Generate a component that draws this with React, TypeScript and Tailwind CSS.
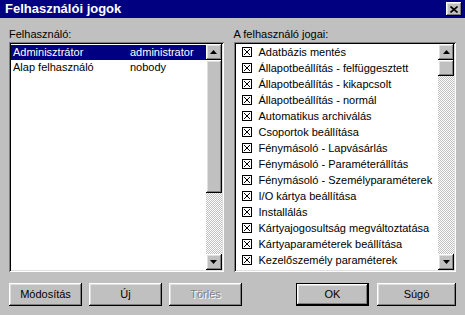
import React from "react";

const raised =
  "shadow-[inset_-1px_-1px_#000,inset_1px_1px_#fff,inset_-2px_-2px_#808080,inset_2px_2px_#dfdfdf]";
const sunken =
  "shadow-[inset_1px_1px_#808080,inset_-1px_-1px_#fff,inset_2px_2px_#000,inset_-2px_-2px_#dfdfdf]";
const track =
  "bg-[image:repeating-conic-gradient(#fff_0_25%,#c0c0c0_0_50%)] bg-[length:2px_2px]";

const users = [
  { name: "Adminisztrátor", login: "administrator" },
  { name: "Alap felhasználó", login: "nobody" },
];

const rights = [
  "Adatbázis mentés",
  "Állapotbeállítás - felfüggesztett",
  "Állapotbeállítás - kikapcsolt",
  "Állapotbeállítás - normál",
  "Automatikus archiválás",
  "Csoportok beállítása",
  "Fénymásoló - Lapvásárlás",
  "Fénymásoló - Paraméterállítás",
  "Fénymásoló - Személyparaméterek",
  "I/O kártya beállítása",
  "Installálás",
  "Kártyajogosultság megváltoztatása",
  "Kártyaparaméterek beállítása",
  "Kezelőszemély paraméterek",
];

function Arrow({ down }: { down?: boolean }) {
  return (
    <div className={`flex h-[16px] w-[16px] shrink-0 items-center justify-center bg-[#c0c0c0] ${raised}`}>
      <svg width="7" height="4" viewBox="0 0 7 4" aria-hidden>
        <path d={down ? "M0 0h7L3.5 4z" : "M0 4h7L3.5 0z"} fill="#000" />
      </svg>
    </div>
  );
}

function ScrollBar({ thumb }: { thumb: number }) {
  return (
    <div className="flex w-[16px] shrink-0 flex-col">
      <Arrow />
      <div className={`shrink-0 bg-[#c0c0c0] ${raised}`} style={{ height: thumb }} />
      <div className={`flex-1 ${track}`} />
      <Arrow down />
    </div>
  );
}

function CheckBox() {
  return (
    <svg width="10" height="10" viewBox="0 0 10 10" className="shrink-0" aria-hidden>
      <rect x="0.5" y="0.5" width="9" height="9" fill="#fff" stroke="#000" />
      <path d="M2 2l6 6M8 2l-6 6" stroke="#000" strokeWidth="1" />
    </svg>
  );
}

function Button({ label, w, disabled, def }: { label: string; w: string; disabled?: boolean; def?: boolean }) {
  return (
    <div
      className={`flex h-[23px] items-center justify-center bg-[#c0c0c0] ${w} ${
        def ? "border border-black" : ""
      }`}
    >
      <div className={`flex h-full w-full items-center justify-center ${raised}`}>
        <span
          className={
            disabled ? "text-[#808080] [text-shadow:1px_1px_0_#fff]" : "text-black"
          }
        >
          {label}
        </span>
      </div>
    </div>
  );
}

export default function App() {
  return (
    <div className="flex h-[315px] w-[465px] flex-col overflow-hidden bg-[#c0c0c0] font-['Liberation_Sans',Arial,sans-serif] text-[11px] text-black">
      <div className="flex h-[18px] shrink-0 items-center justify-between bg-[#000080] pl-[5px] pr-[3px]">
        <span className="text-[13px] font-bold text-white">Felhasználói jogok</span>
        <div className={`flex h-[14px] w-[16px] items-center justify-center bg-[#c0c0c0] ${raised}`}>
          <svg width="8" height="7" viewBox="0 0 8 7" aria-hidden>
            <path d="M0.5 0.5l7 6M7.5 0.5l-7 6" stroke="#000" strokeWidth="1.6" />
          </svg>
        </div>
      </div>

      <div className="flex flex-col px-[9px] pt-[9px]">
        <div className="flex gap-[10px]">
          <div className="flex w-[215px] flex-col">
            <div className="mb-[1px] h-[14px] leading-[14px]">Felhasználó:</div>
            <div className={`flex h-[230px] bg-white p-[2px] ${sunken}`}>
              <div className="flex flex-1 flex-col pt-[1px]">
                {users.map((u, i) => (
                  <div
                    key={u.login}
                    className={`flex h-[15px] items-center pl-[2px] ${
                      i === 0 ? "bg-[#000080] text-white" : ""
                    }`}
                  >
                    <span className="w-[117px]">{u.name}</span>
                    <span>{u.login}</span>
                  </div>
                ))}
              </div>
              <ScrollBar thumb={133} />
            </div>
          </div>

          <div className="flex w-[223px] flex-col">
            <div className="mb-[1px] h-[14px] leading-[14px]">A felhasználó jogai:</div>
            <div className={`flex h-[230px] bg-white p-[2px] ${sunken}`}>
              <div className="flex min-w-0 flex-1 flex-col overflow-hidden">
                {rights.map((r) => (
                  <div key={r} className="flex h-[16px] items-center gap-[7px] pl-[6px]">
                    <CheckBox />
                    <span className="whitespace-nowrap">{r}</span>
                  </div>
                ))}
              </div>
              <ScrollBar thumb={16} />
            </div>
          </div>
        </div>

        <div className="mt-[11px] flex">
          <div className="flex gap-[7px]">
            <Button label="Módosítás" w="w-[73px]" />
            <Button label="Új" w="w-[73px]" />
            <Button label="Törlés" w="w-[73px]" disabled />
          </div>
          <div className="ml-auto flex gap-[8px]">
            <Button label="OK" w="w-[73px]" def />
            <Button label="Súgó" w="w-[79px]" />
          </div>
        </div>
      </div>
    </div>
  );
}
